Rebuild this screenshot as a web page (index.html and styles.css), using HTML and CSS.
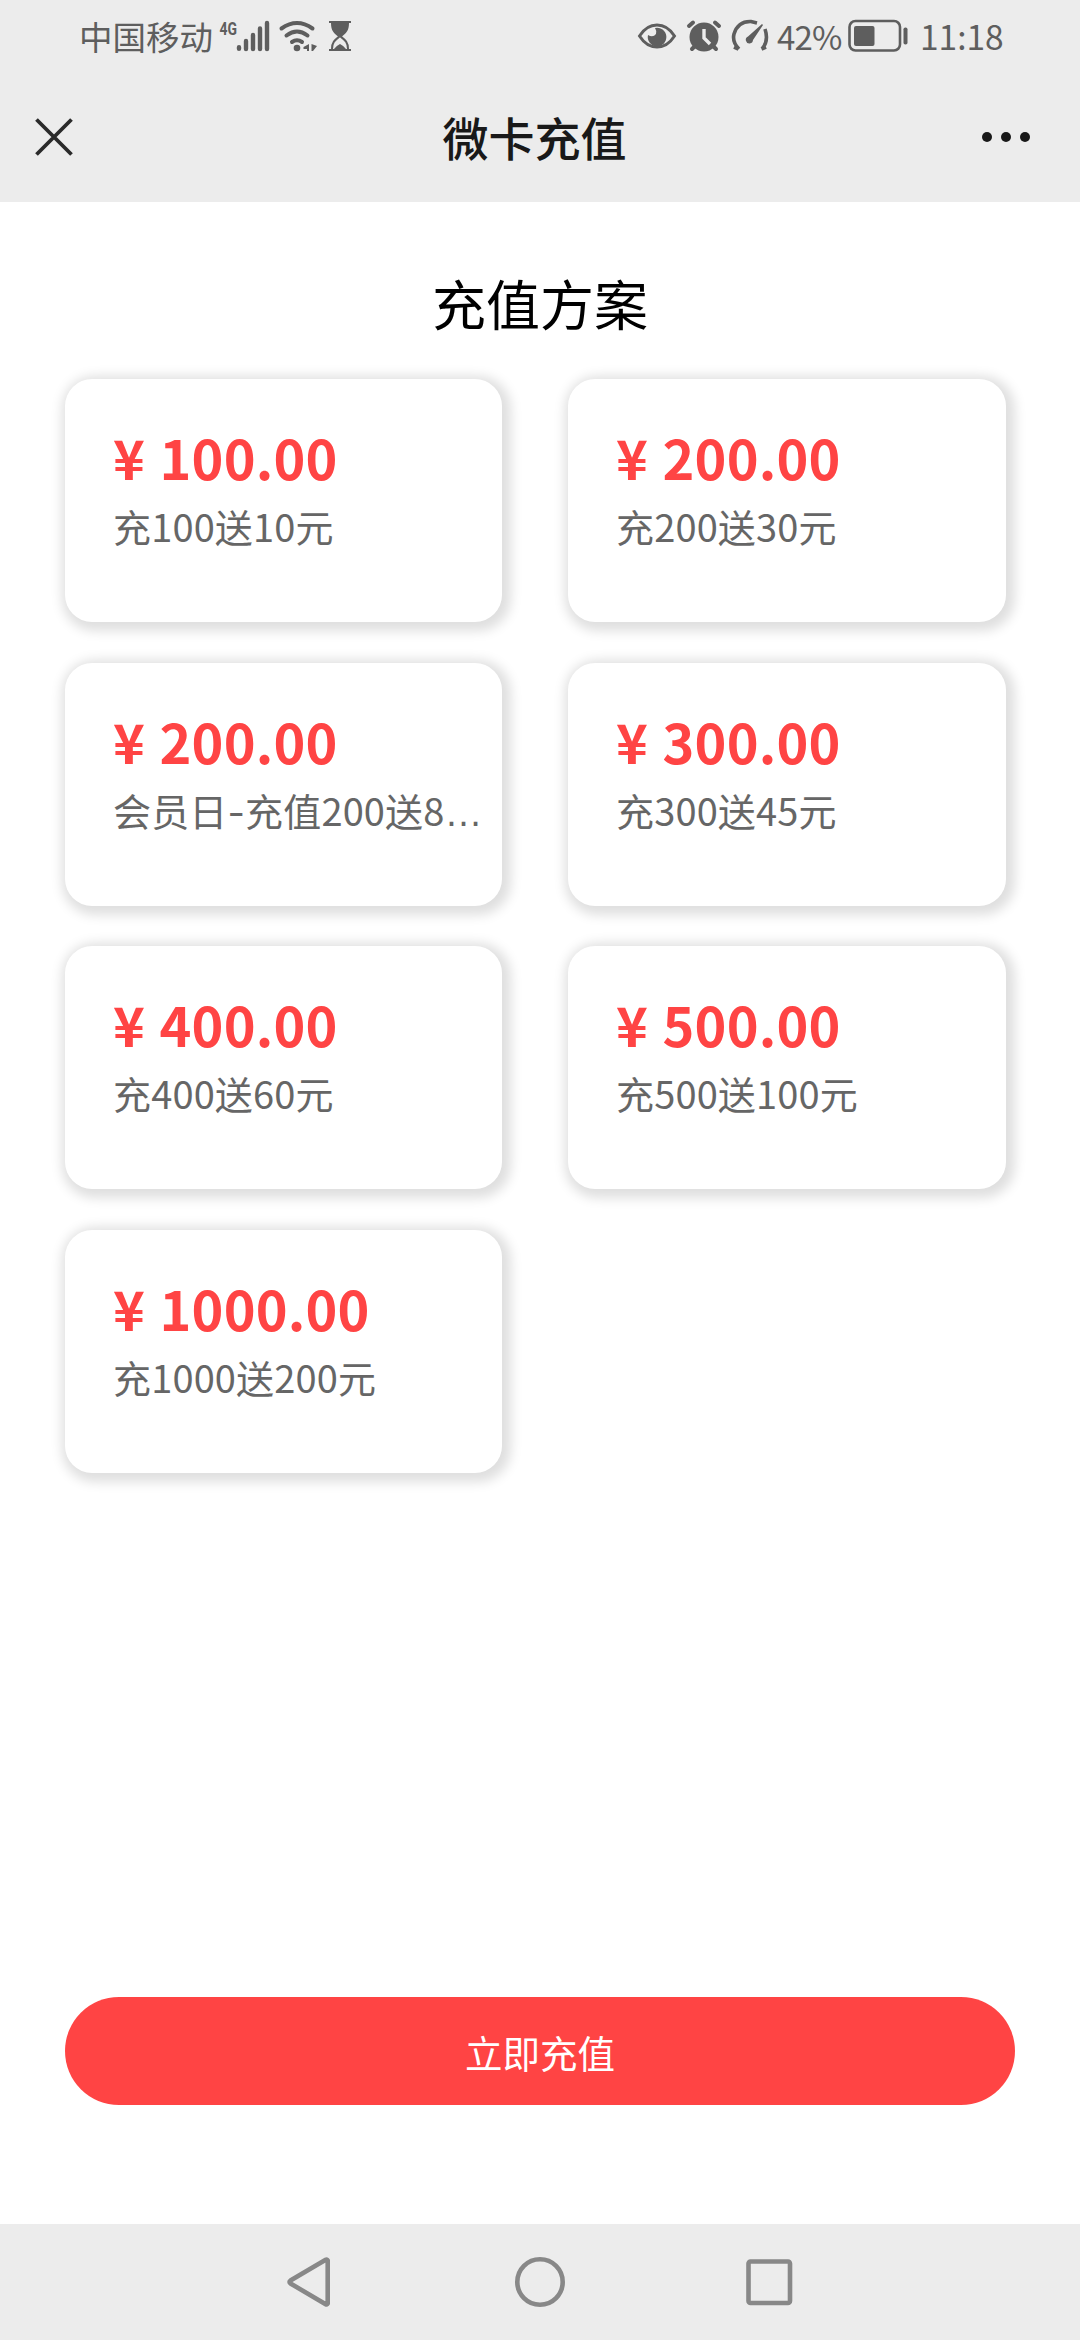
FILE: index.html
```html
<!DOCTYPE html>
<html lang="zh-CN">
<head>
<meta charset="utf-8">
<title>微卡充值</title>
<link rel="stylesheet" href="styles.css">
</head>
<body>
<div class="screen">
  <header class="top">
    <div class="status">
      <div class="status-left">
        <span class="carrier">中国移动</span>
        <svg class="ic-signal" width="150" height="48" viewBox="210 12 150 48" fill="#5e5e5e">
          <text x="219.5" y="34.500" font-size="19" class="net" textLength="17.500" lengthAdjust="spacingAndGlyphs">4G</text>
          <g stroke="#5e5e5e" stroke-width="4.4" stroke-linecap="round" fill="none">
            <path d="M239 47.3v1.4M246 41v8M253 35v14M260 28.500v20.500M267 23v26"/>
            <path d="M281.500 28.500q15.500-11 31 0M286.500 35.500q10.500-8 21 0M292 42q5-3.500 10 0" stroke-width="4"/>
          </g>
          <circle cx="297" cy="48" r="3.300"/>
          <path d="M309 44v7h-2v-2h-3.500v-2zM311.500 44l5.500 2-4 5h-1.500z"/>
          <path d="M329 21h22v2h-22zM329 49h22v2h-22zM331 23h18c0 8-3 10-7.500 14h-3c-4.500-4-7.500-6-7.500-14zM334 49q2-3 6-5 4 2 6 5z"/>
          <path d="M332 49c0-7 3-9 8-13 5 4 8 6 8 13" fill="none" stroke="#5e5e5e" stroke-width="2"/>
        </svg>
      </div>
      <div class="status-right">
        <svg width="150" height="48" viewBox="630 12 150 48" fill="#5e5e5e">
          <path d="M638.500 36q7-11 17.500-11t17.500 11q-7 11-17.500 11t-17.500-11z" fill="none" stroke="#5e5e5e" stroke-width="3"/>
          <path d="M654 28a9.300 9.300 0 1 1-7 7q5 3 8-1 1-3-1-6z"/>
          <circle cx="703" cy="37" r="14.500"/>
          <path d="M688 26l4-3.500M714 22.500l4 3.500M694 46l-3 3M712 46l3 3" stroke="#5e5e5e" stroke-width="4" stroke-linecap="round"/>
          <path d="M703 29v9l6 6" fill="none" stroke="#ececec" stroke-width="3.400"/>
          <g fill="none" stroke="#5e5e5e" stroke-width="3.600"><path d="M738 49q-7-7-5-15 4-13 17-12.500l6 1.500M764 29q4 12-3 20M733 47l4.500 2M765 47l-4.500 2"/></g>
          <path d="M761 24l1 1-10 15a3.600 3.600 0 1 1-5-3.500z"/>
        </svg>
        <span class="percent">42%</span>
        <svg class="ic-battery" width="62" height="34" viewBox="0 0 62 34">
          <rect x="1.500" y="2" width="50.500" height="29.500" rx="6" fill="none" stroke="#5e5e5e" stroke-width="2.600"/>
          <rect x="6" y="7" width="20.500" height="20" rx="2" fill="#5e5e5e"/>
          <rect x="55.500" y="8.500" width="4" height="17" rx="1.800" fill="#5e5e5e"/>
        </svg>
        <span class="clock">11:18</span>
      </div>
    </div>
    <nav class="bar">
      <svg width="40" height="40" viewBox="0 0 40 40"><path d="M2.500 2.500l35 35M37.500 2.500L2.500 37.500" stroke="#2a2a2a" stroke-width="3.800"/></svg>
      <h1 class="bar-title">微卡充值</h1>
      <svg class="more" width="50" height="12" viewBox="0 0 50 12" fill="#191919"><circle cx="6" cy="6" r="5"/><circle cx="25" cy="6" r="5"/><circle cx="44" cy="6" r="5"/></svg>
    </nav>
  </header>
  <main class="content">
    <h2 class="heading">充值方案</h2>
    <div class="plans">
      <div class="plan"><div class="price">¥ 100.00</div><div class="desc">充100送10元</div></div>
      <div class="plan"><div class="price">¥ 200.00</div><div class="desc">充200送30元</div></div>
      <div class="plan"><div class="price">¥ 200.00</div><div class="desc">会员日<span class="dash">-</span>充值200送8<span class="dots">…</span></div></div>
      <div class="plan"><div class="price">¥ 300.00</div><div class="desc">充300送45元</div></div>
      <div class="plan"><div class="price">¥ 400.00</div><div class="desc">充400送60元</div></div>
      <div class="plan"><div class="price">¥ 500.00</div><div class="desc">充500送100元</div></div>
      <div class="plan"><div class="price">¥ 1000.00</div><div class="desc">充1000送200元</div></div>
    </div>
    <button class="submit">立即充值</button>
  </main>
  <footer class="navkeys">
    <svg width="50" height="52" viewBox="0 0 50 52"><path d="M41.700 4.500v43q-.7 1.500-2 .7L4.500 27.500q-2-1.500 0-3L39.700 3.800q1.300-.8 2 .7z"/></svg>
    <svg width="52" height="52" viewBox="0 0 52 52"><circle cx="26" cy="26" r="22.700"/></svg>
    <svg width="50" height="50" viewBox="0 0 50 50"><rect x="4.500" y="4.500" width="41.500" height="41.500" rx="2"/></svg>
  </footer>
</div>
</body>
</html>
```
FILE: styles.css
```css
* { box-sizing: border-box; }
body { margin: 0; font-family: "Noto Sans CJK SC", sans-serif; background: #fff; }
svg { display: block; flex: none; }
.screen { width: 1080px; height: 2340px; display: flex; flex-direction: column; overflow: hidden; }
.top { height: 202px; background: #ececec; }
.status { height: 72px; display: flex; justify-content: space-between; padding: 0 76px 0 79px; color: #5e5e5e; font-size: 33.500px; line-height: 72px; }
.status-left, .status-right { display: flex; align-items: center; }
.carrier { width: 131px; white-space: nowrap; }
.net { font-family: Roboto, sans-serif; font-weight: 700; }
.percent { width: 71px; margin-left: -4px; font-size: 33px; letter-spacing: -0.8px; white-space: nowrap; }
.clock { margin-left: 10px; width: 84px; white-space: nowrap; }
.bar { height: 130px; display: grid; grid-template-columns: 1fr auto 1fr; align-items: center; padding: 0 49px 0 34px; }
.bar-title { margin: -3px 0 0 4px; font-size: 46px; font-weight: 500; color: #191919; line-height: 60px; }
.more { justify-self: end; }
.content { flex: 1; padding: 0 65px; display: flex; flex-direction: column; }
.heading { margin: 65px 0 40px; font-size: 54px; line-height: 72px; font-weight: 400; text-align: center; color: #000; }
.plans { display: grid; grid-template-columns: 437px 438px; column-gap: 66px; row-gap: 40.500px; }
.plan { height: 243px; border-radius: 27px; background: #fff; padding: 46px 0 0 48px; box-shadow: 3px 3px 12px 6px rgba(0,0,0,.13); }
.price { font-size: 54px; line-height: 64px; font-weight: 700; color: #ff4444; white-space: nowrap; word-spacing: 2px; letter-spacing: 0.2px; }
.desc { font-size: 38px; line-height: 50px; margin-top: 12px; color: #666; white-space: nowrap; letter-spacing: 0.15px; }
.dash { font-family: Inter, sans-serif; }
.dots { font-family: "Liberation Sans", sans-serif; }
.submit { margin: auto 0 119px; width: 950px; height: 108px; border: 0; border-radius: 54px; background: #ff4444; color: #fff; font: 400 37.500px/102px "Noto Sans CJK SC", sans-serif; padding: 2px 0 0; }
.navkeys { height: 116px; background: #ececec; display: flex; align-items: center; justify-content: center; gap: 178px; }
.navkeys svg { fill: none; stroke: #888; stroke-width: 4.600; }
```
